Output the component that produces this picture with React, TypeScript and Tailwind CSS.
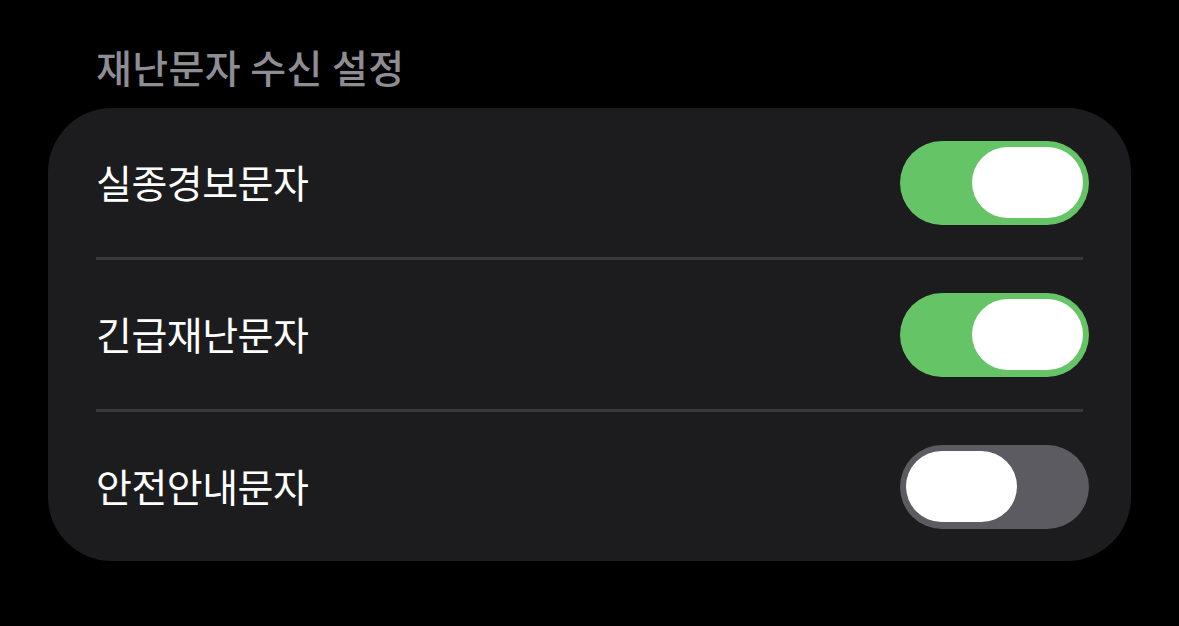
import { useState } from 'react'

const font = { fontFamily: '"Noto Sans CJK KR", "Noto Sans", sans-serif' }

type Item = { id: string; label: string; on: boolean }

function Toggle({ on, onClick }: { on: boolean; onClick: () => void }) {
  return (
    <button
      onClick={onClick}
      className={`flex items-center w-[189px] h-[84px] rounded-full px-[6px] ${
        on ? 'bg-[#65c466] justify-end' : 'bg-[#5c5b61] justify-start'
      }`}
    >
      <span className="block w-[111px] h-[71px] rounded-full bg-white" />
    </button>
  )
}

export default function App() {
  const [items, setItems] = useState<Item[]>([
    { id: 'missing', label: '실종경보문자', on: true },
    { id: 'emergency', label: '긴급재난문자', on: true },
    { id: 'safety', label: '안전안내문자', on: false },
  ])

  const toggle = (id: string) => {
    setItems((prev) => prev.map((it) => (it.id === id ? { ...it, on: !it.on } : it)))
  }

  return (
    <div className="w-full h-[626px] bg-black pt-[42px]" style={font}>
      <h2 className="pl-[96px] text-[39px] leading-[48px] font-medium tracking-[0.4px] text-[#8d8d93]">
        재난문자 수신 설정
      </h2>

      <div className="ml-[48px] mt-[18px] w-[1083px] rounded-[64px] bg-[#1c1c1e]">
        {items.map((item, i) => (
          <div key={item.id}>
            {i > 0 && <div className="mx-[48px] h-[3px] bg-[#38383a]" />}
            <div className="flex items-center justify-between h-[149px] pl-[48px] pr-[42px]">
              <span className="text-[39px] leading-[44px] tracking-[-0.5px] text-white -mt-[4px]">
                {item.label}
              </span>
              <Toggle on={item.on} onClick={() => toggle(item.id)} />
            </div>
          </div>
        ))}
      </div>
    </div>
  )
}
